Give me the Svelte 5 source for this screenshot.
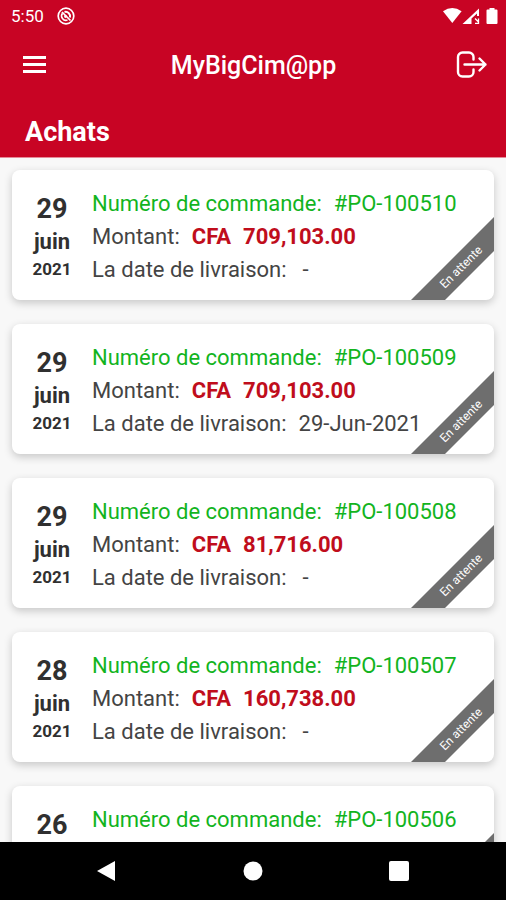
<script lang="ts">
  type Order = { day: string; month?: string; year?: string; ref: string; amount?: string; delivery?: string };

  const orders: Order[] = [
    { day: '29', month: 'juin', year: '2021', ref: '#PO-100510', amount: '709,103.00', delivery: '-' },
    { day: '29', month: 'juin', year: '2021', ref: '#PO-100509', amount: '709,103.00', delivery: '29-Jun-2021' },
    { day: '29', month: 'juin', year: '2021', ref: '#PO-100508', amount: '81,716.00', delivery: '-' },
    { day: '28', month: 'juin', year: '2021', ref: '#PO-100507', amount: '160,738.00', delivery: '-' },
    { day: '26', ref: '#PO-100506' }
  ];
</script>

<div class="screen">
  <header>
    <div class="status">
      <span>5:50</span>
      <svg width="18" height="18" viewBox="0 0 18 18" fill="none" stroke="#fff" aria-hidden="true">
        <circle cx="9" cy="9" r="7.8" stroke-width="1.7" />
        <path d="M10.500 13A4.400 4.400 0 0 1 5.500 6.200" stroke-width="1.600" />
        <path d="M5 5l8.500 8.500" stroke-width="1.700" />
        <path d="M7.500 5A4.500 4.500 0 0 1 13 10.500" stroke-width="2" />
        <circle cx="8.500" cy="9.500" r="1.400" fill="#fff" stroke="none" />
      </svg>
      <svg class="signals" width="56" height="18" viewBox="0 0 56 18" fill="#fff" aria-hidden="true">
        <path d="M0 4.200Q9.300-2 18.600 4.200L9.300 16z" />
        <path fill-rule="evenodd" d="M19.500 17L36 1.500V9h-2V6.500L28.500 11.500V17z" />
        <path d="M32 11.500l3.500 3.500M35.500 11.500v4.800h-3.500" fill="none" stroke="#fff" stroke-width="1.300" />
        <path d="M46.500 1h5v1.500h2a1 1 0 0 1 1 1V16a1 1 0 0 1-1 1h-9a1 1 0 0 1-1-1V3.500a1 1 0 0 1 1-1h2z" />
      </svg>
    </div>
    <div class="bar">
      <button type="button" class="menu" aria-label="Menu">
        <svg width="24" height="20" viewBox="0 0 24 20" fill="#fff" aria-hidden="true">
          <path d="M0 1h23v3H0zM0 8h23v3H0zM0 15h23v3H0z" />
        </svg>
      </button>
      <h1>MyBigCim@pp</h1>
      <button type="button" aria-label="Déconnexion">
        <svg width="32" height="28" viewBox="0 0 32 28" fill="none" stroke="#fff" stroke-width="2.400" stroke-linecap="round" stroke-linejoin="round" aria-hidden="true">
          <path d="M17.500 8.500V6a4.500 4.500 0 0 0-4.500-4.500H6.500A4.500 4.500 0 0 0 2 6v15a4.500 4.500 0 0 0 4.500 4.500H13a4.500 4.500 0 0 0 4.500-4.500V18.500" />
          <path d="M8.500 13.500h21M23.500 7.500l6 6-6 6" />
        </svg>
      </button>
    </div>
    <h2>Achats</h2>
  </header>

  <main>
    {#each orders as order}
      <article>
        <div class="date">
          <span class="day">{order.day}</span>
          {#if order.month}<span class="month">{order.month}</span>{/if}
          {#if order.year}<span class="year">{order.year}</span>{/if}
        </div>
        <div class="details">
          <p class="ref"><span>Numéro de commande:</span><span>{order.ref}</span></p>
          {#if order.amount}
            <p><span>Montant:</span><strong>CFA</strong><strong>{order.amount}</strong></p>
          {/if}
          {#if order.delivery}
            <p><span>La date de livraison:</span><span class:empty={order.delivery === '-'}>{order.delivery}</span></p>
          {/if}
        </div>
        <div class="ribbon">{order.delivery ? 'En attente' : '\u00a0'}</div>
      </article>
    {/each}
  </main>

  <nav aria-label="Système">
    <button type="button" aria-label="Retour">
      <svg width="20" height="22" viewBox="0 0 20 22" fill="#fff"><path d="M0 11L18 1v20z" /></svg>
    </button>
    <button type="button" aria-label="Accueil">
      <svg width="20" height="20" viewBox="0 0 20 20" fill="#fff"><circle cx="10" cy="10" r="9.500" /></svg>
    </button>
    <button type="button" aria-label="Applications récentes">
      <svg width="20" height="20" viewBox="0 0 20 20" fill="#fff"><rect width="20" height="20" rx="2" /></svg>
    </button>
  </nav>
</div>

<style>
  .screen {
    display: flex;
    flex-direction: column;
    height: 100vh;
    background: #f8f8f8;
    color: #333;
    font-family: Roboto, sans-serif;
  }

  header {
    flex: none;
    background: #c80424;
    color: #fff;
    border-bottom: 1px solid #e58a98;
  }

  .status {
    display: flex;
    align-items: center;
    gap: 13px;
    height: 31px;
    padding: 0 7px 0 11px;
    font-size: 17px;
  }

  .signals {
    margin-left: auto;
  }

  .bar {
    display: flex;
    align-items: center;
    justify-content: space-between;
    height: 68px;
    padding: 0 18px 0 23px;
  }

  button {
    display: flex;
    align-items: center;
    justify-content: center;
    padding: 0;
    border: 0;
    background: none;
  }

  .menu {
    justify-content: flex-start;
    width: 28px;
  }

  h1 {
    margin: 0;
    font-size: 25px;
    font-weight: 500;
  }

  h2 {
    margin: 0;
    padding: 17px 25px 9px;
    font-size: 27px;
    font-weight: 700;
    line-height: 32px;
  }

  main {
    display: flex;
    flex: 1;
    flex-direction: column;
    gap: 24px;
    min-height: 0;
    overflow: hidden;
    padding: 12px 12px 0;
  }

  article {
    position: relative;
    display: flex;
    flex: none;
    gap: 12px;
    overflow: hidden;
    box-sizing: border-box;
    min-height: 130px;
    padding: 16px 0 12px 12px;
    border-radius: 8px;
    background: #fff;
    box-shadow: 0 3px 8px rgb(0 0 0 / 20%);
  }

  .date {
    display: flex;
    flex-direction: column;
    align-items: center;
    width: 56px;
    padding-top: 6px;
    font-weight: 700;
    color: #303030;
  }

  .day {
    font-size: 27px;
    line-height: 34px;
  }

  .month {
    font-size: 22px;
    line-height: 32px;
  }

  .year {
    font-size: 17px;
    line-height: 22px;
  }

  .details {
    padding-top: 1px;
    color: #444;
    font-size: 22px;
  }

  p {
    display: flex;
    gap: 12px;
    margin: 0;
    line-height: 33px;
    white-space: nowrap;
  }

  .ref {
    color: #12b41e;
  }

  strong {
    color: #c00d1c;
    font-weight: 700;
  }

  .empty {
    padding-left: 4px;
  }

  .ribbon {
    position: absolute;
    right: -32px;
    bottom: 21px;
    width: 130px;
    transform: rotate(-45deg);
    background: #6e6e6e;
    color: #fff;
    font-size: 12px;
    line-height: 24px;
    text-align: center;
  }

  nav {
    display: flex;
    flex: none;
    align-items: center;
    height: 58px;
    padding: 0 34px;
    background: #000;
  }

  nav button {
    flex: 1;
  }
</style>
